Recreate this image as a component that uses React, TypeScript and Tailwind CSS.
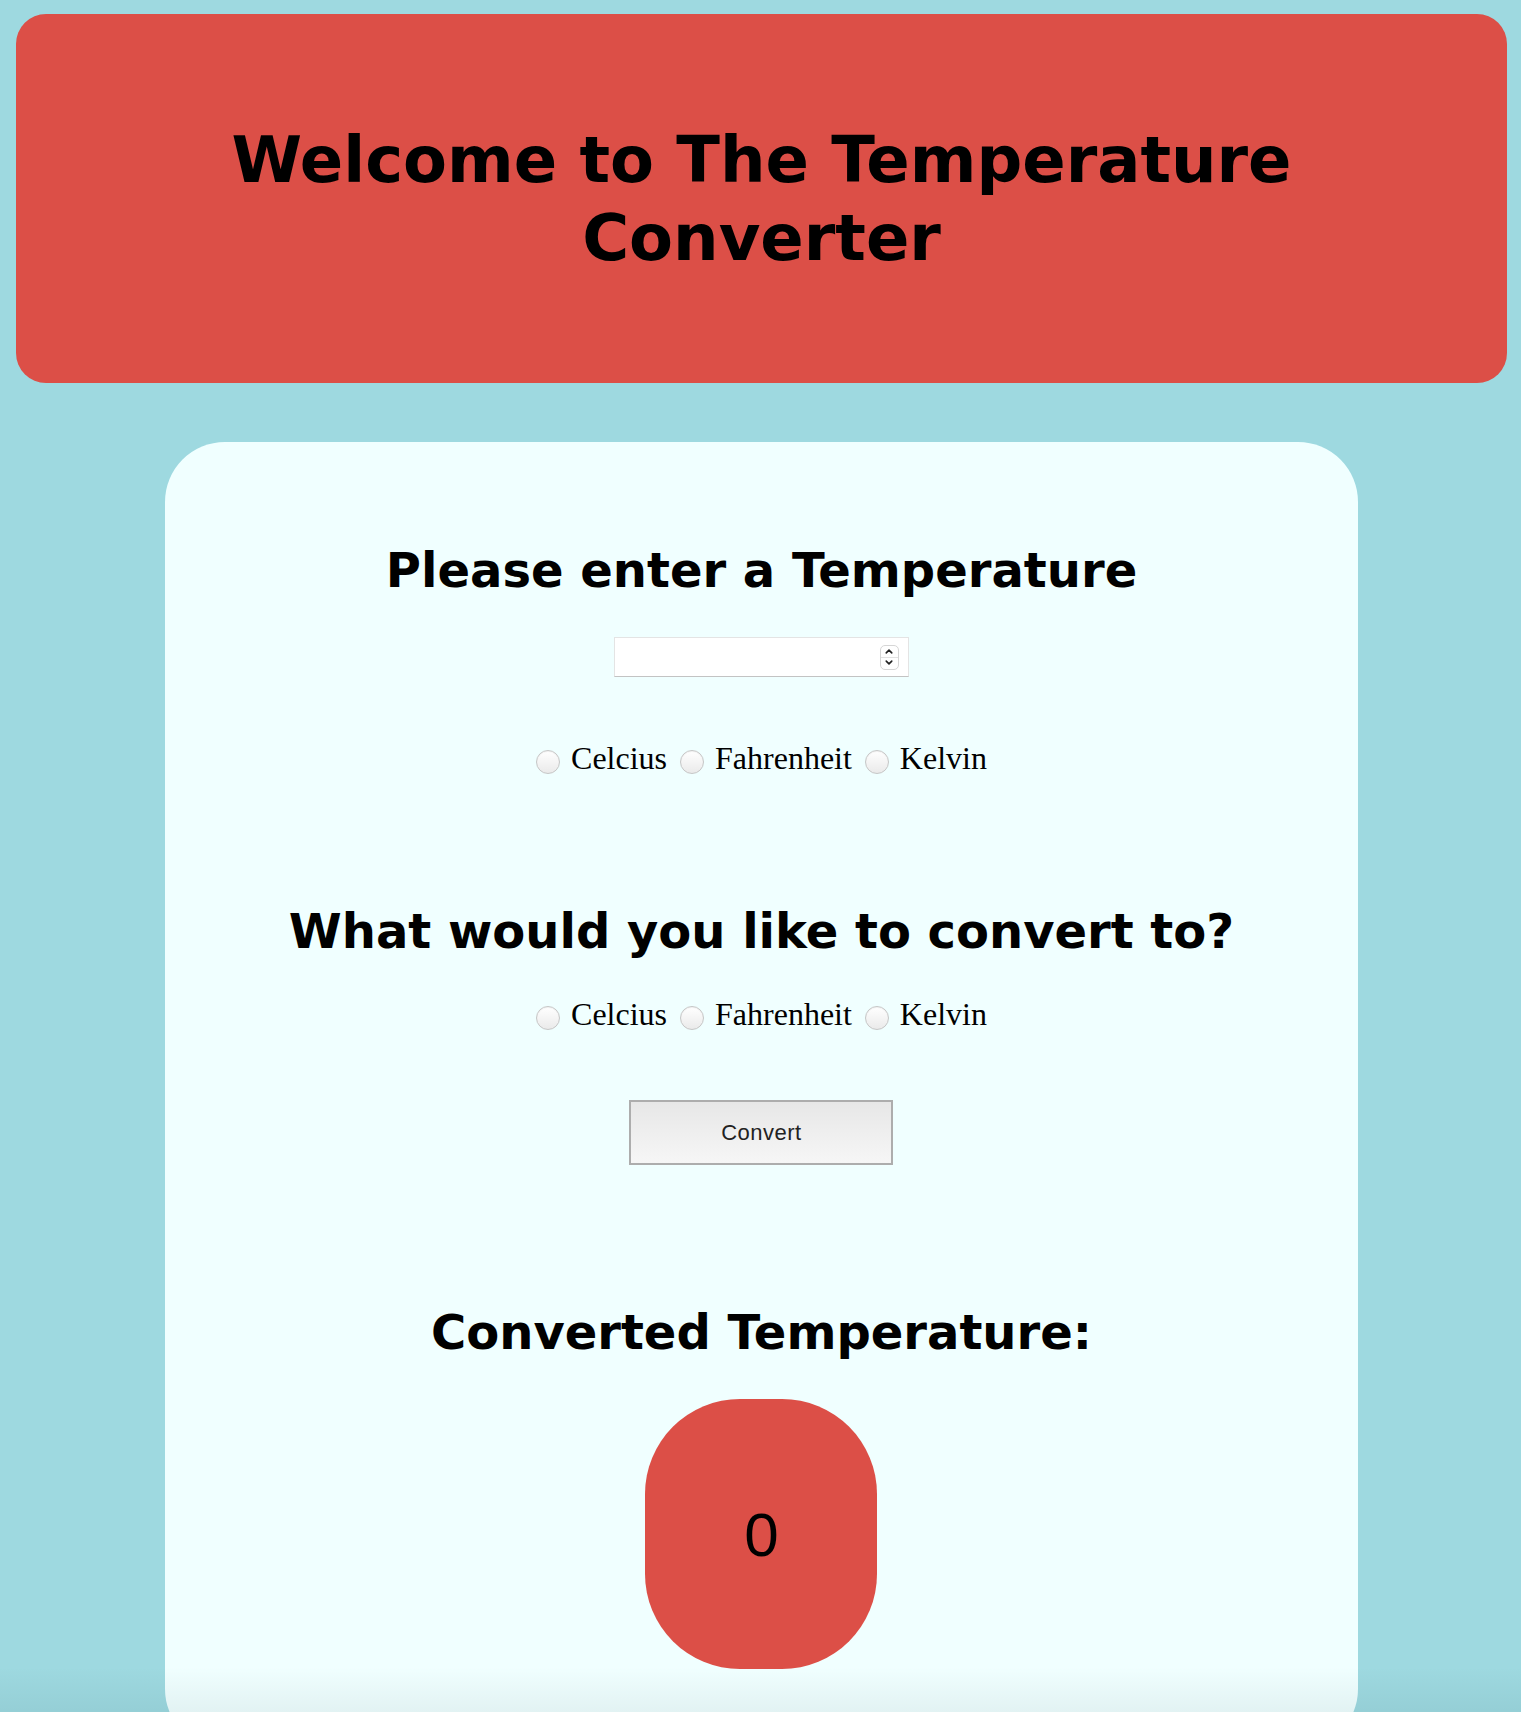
import { ChevronDown, ChevronUp } from "lucide-react";

const units = ["Celcius", "Fahrenheit", "Kelvin"];

const RadioRow = ({ name }: { name: string }) => {
  return (
    <div className="flex items-center gap-[13px] font-['Liberation_Serif',serif] text-[32px] leading-[37px] text-black">
      {units.map((unit) => (
        <label key={unit} className="flex items-center">
          <input
            type="radio"
            name={name}
            value={unit}
            className="mr-[11px] mt-[6px] h-[24px] w-[24px] appearance-none rounded-full border border-[#c6c6c6] bg-linear-to-b from-[#ffffff] to-[#eaeaea] shadow-[inset_0_1px_1px_rgba(0,0,0,0.05)]"
          />
          {unit}
        </label>
      ))}
    </div>
  );
};

const App = () => {
  return (
    <div className="relative h-[1712px] overflow-hidden bg-[#9ed9e0] pl-[16px] pr-[14px] pt-[14px]">
      {/* Header */}
      <div className="flex h-[369px] items-center justify-center rounded-[30px] bg-[#dc4f47]">
        <h1 className="max-w-[1100px] text-center font-['DejaVu_Sans',sans-serif] text-[64px] font-bold leading-[78px] text-black">
          Welcome to The Temperature Converter
        </h1>
      </div>

      {/* Converter card */}
      <div className="mx-auto mt-[59px] flex w-[80%] flex-col items-center rounded-[60px] bg-[#f0ffff] pt-[100px] pb-[80px]">
        <h2 className="font-['DejaVu_Sans',sans-serif] text-[48px] font-bold leading-[56px] text-black">
          Please enter a Temperature
        </h2>

        <div className="mt-[39px] flex h-[40px] w-[295px] items-center border border-[#e4e4e4] border-b-[#c3c3c3] bg-white pr-[9px]">
          <input
            type="text"
            className="h-full min-w-0 flex-1 bg-transparent px-2 outline-none"
          />
          <div className="flex h-[25px] w-[19px] flex-col items-center justify-center rounded-[5px] border border-[#d6d6d6] bg-white text-[#222]">
            <ChevronUp size={12} strokeWidth={3.5} />
            <div className="h-px w-full bg-[#e2e2e2]" />
            <ChevronDown size={12} strokeWidth={3.5} />
          </div>
        </div>

        <div className="mt-[63px]">
          <RadioRow name="from" />
        </div>

        <h2 className="mt-[126px] font-['DejaVu_Sans',sans-serif] text-[48px] font-bold leading-[56px] text-black">
          What would you like to convert to?
        </h2>

        <div className="mt-[37px]">
          <RadioRow name="to" />
        </div>

        <button className="mt-[67px] h-[65px] w-[264px] border-2 border-[#adadad] bg-linear-to-b from-[#e7e7e7] to-[#f6f6f6] font-['Liberation_Sans',sans-serif] text-[22px] tracking-[0.5px] text-[#222]">
          Convert
        </button>

        <h2 className="mt-[139px] font-['DejaVu_Sans',sans-serif] text-[48px] font-bold leading-[56px] text-black">
          Converted Temperature:
        </h2>

        <div className="mt-[39px] flex h-[270px] w-[232px] items-center justify-center rounded-[95px] bg-[#dc4f47] font-['Liberation_Sans',sans-serif] text-[62px] text-black">
          0
        </div>
      </div>

      {/* window edge shade */}
      <div className="pointer-events-none absolute inset-x-0 bottom-0 h-[45px] bg-linear-to-b from-transparent to-[rgba(0,40,50,0.06)]" />
    </div>
  );
};

export default App;
